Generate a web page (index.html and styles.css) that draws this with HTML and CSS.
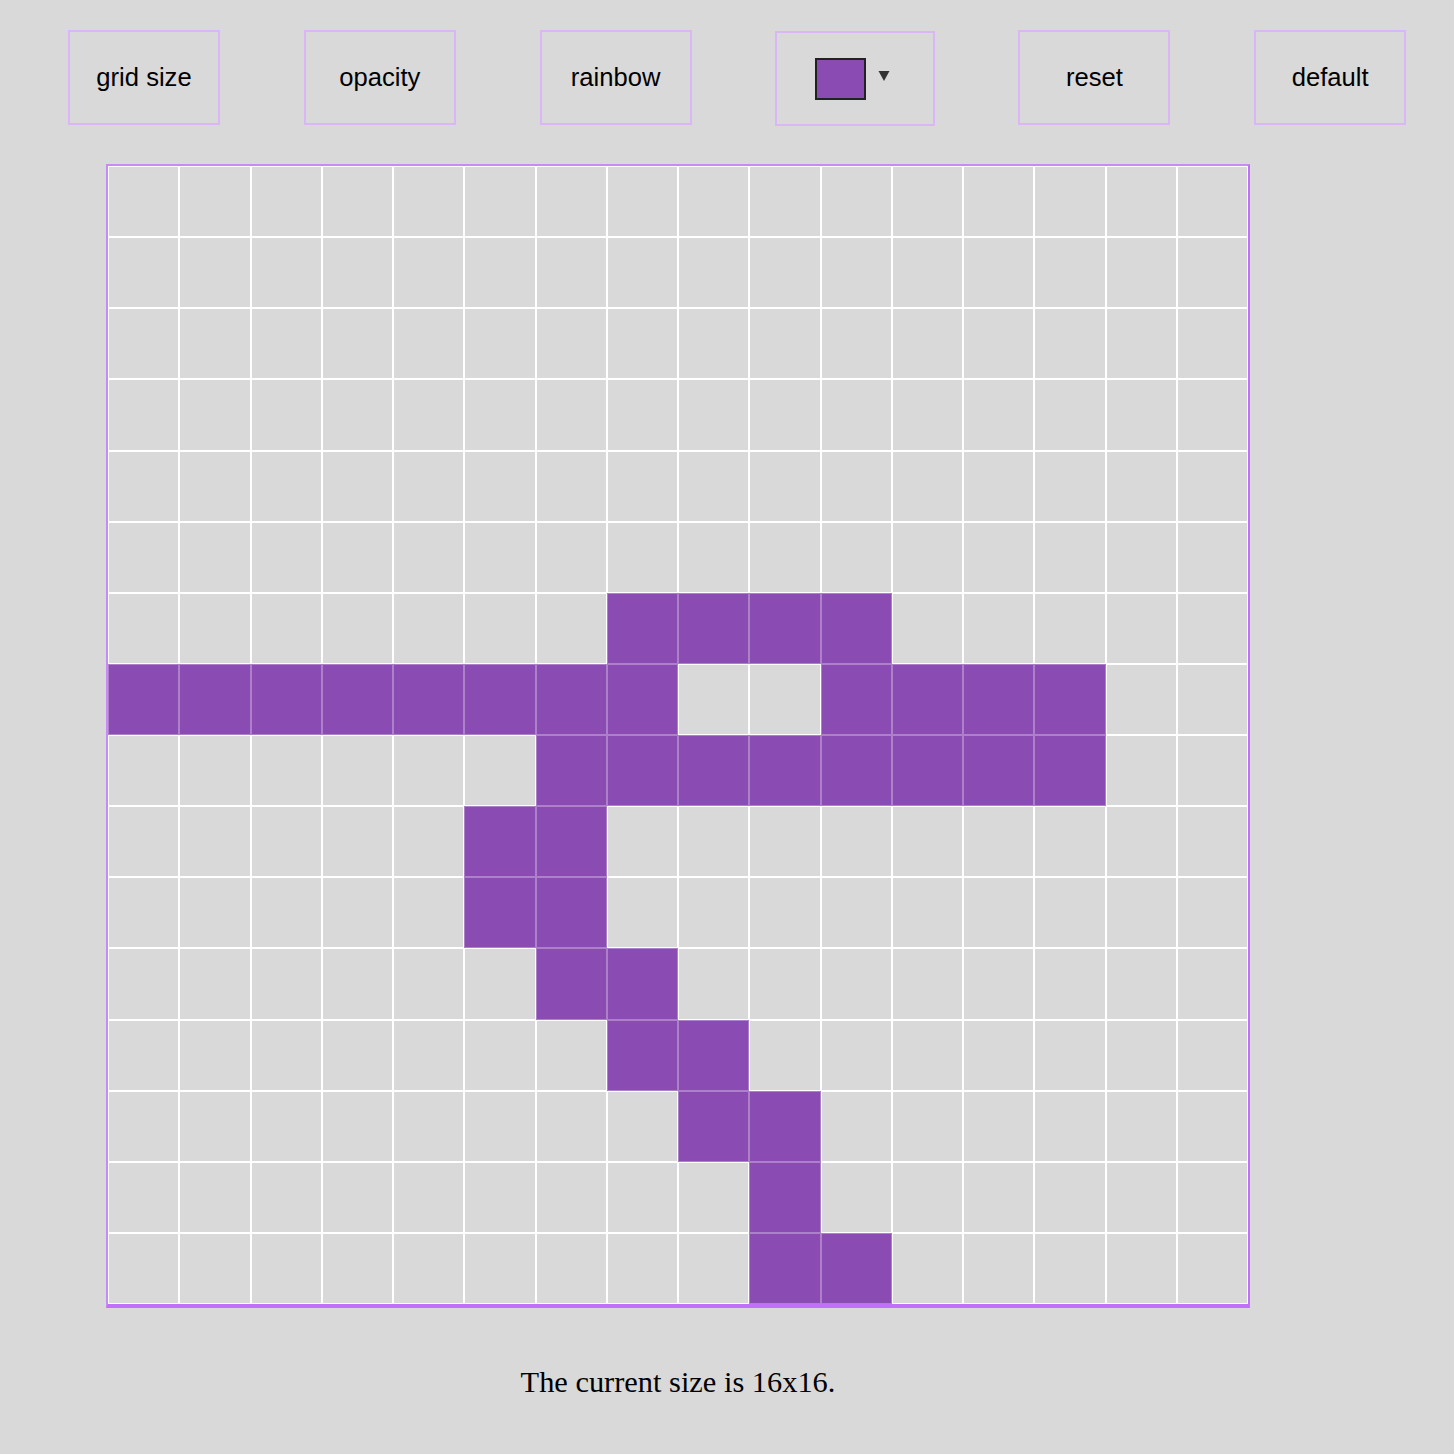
FILE: index.html
```html
<!DOCTYPE html>
<html lang="en">
<head>
<meta charset="utf-8">
<title>Etch a Sketch</title>
<link rel="stylesheet" href="styles.css">
</head>
<body>
<div class="toolbar">
  <button class="btn">grid size</button>
  <button class="btn">opacity</button>
  <button class="btn">rainbow</button>
  <div class="picker">
    <span class="swatch"></span>
    <svg class="caret" width="12" height="12" viewBox="0 0 12 12"><polygon points="0.5,1 11.5,1 6,11" fill="#333"/></svg>
  </div>
  <button class="btn">reset</button>
  <button class="btn">default</button>
</div>
<main class="board">
  <div class="grid">
    <div class="c"></div><div class="c"></div><div class="c"></div><div class="c"></div><div class="c"></div><div class="c"></div><div class="c"></div><div class="c"></div><div class="c"></div><div class="c"></div><div class="c"></div><div class="c"></div><div class="c"></div><div class="c"></div><div class="c"></div><div class="c"></div>
    <div class="c"></div><div class="c"></div><div class="c"></div><div class="c"></div><div class="c"></div><div class="c"></div><div class="c"></div><div class="c"></div><div class="c"></div><div class="c"></div><div class="c"></div><div class="c"></div><div class="c"></div><div class="c"></div><div class="c"></div><div class="c"></div>
    <div class="c"></div><div class="c"></div><div class="c"></div><div class="c"></div><div class="c"></div><div class="c"></div><div class="c"></div><div class="c"></div><div class="c"></div><div class="c"></div><div class="c"></div><div class="c"></div><div class="c"></div><div class="c"></div><div class="c"></div><div class="c"></div>
    <div class="c"></div><div class="c"></div><div class="c"></div><div class="c"></div><div class="c"></div><div class="c"></div><div class="c"></div><div class="c"></div><div class="c"></div><div class="c"></div><div class="c"></div><div class="c"></div><div class="c"></div><div class="c"></div><div class="c"></div><div class="c"></div>
    <div class="c"></div><div class="c"></div><div class="c"></div><div class="c"></div><div class="c"></div><div class="c"></div><div class="c"></div><div class="c"></div><div class="c"></div><div class="c"></div><div class="c"></div><div class="c"></div><div class="c"></div><div class="c"></div><div class="c"></div><div class="c"></div>
    <div class="c"></div><div class="c"></div><div class="c"></div><div class="c"></div><div class="c"></div><div class="c"></div><div class="c"></div><div class="c"></div><div class="c"></div><div class="c"></div><div class="c"></div><div class="c"></div><div class="c"></div><div class="c"></div><div class="c"></div><div class="c"></div>
    <div class="c"></div><div class="c"></div><div class="c"></div><div class="c"></div><div class="c"></div><div class="c"></div><div class="c"></div><div class="c on"></div><div class="c on"></div><div class="c on"></div><div class="c on"></div><div class="c"></div><div class="c"></div><div class="c"></div><div class="c"></div><div class="c"></div>
    <div class="c on"></div><div class="c on"></div><div class="c on"></div><div class="c on"></div><div class="c on"></div><div class="c on"></div><div class="c on"></div><div class="c on"></div><div class="c"></div><div class="c"></div><div class="c on"></div><div class="c on"></div><div class="c on"></div><div class="c on"></div><div class="c"></div><div class="c"></div>
    <div class="c"></div><div class="c"></div><div class="c"></div><div class="c"></div><div class="c"></div><div class="c"></div><div class="c on"></div><div class="c on"></div><div class="c on"></div><div class="c on"></div><div class="c on"></div><div class="c on"></div><div class="c on"></div><div class="c on"></div><div class="c"></div><div class="c"></div>
    <div class="c"></div><div class="c"></div><div class="c"></div><div class="c"></div><div class="c"></div><div class="c on"></div><div class="c on"></div><div class="c"></div><div class="c"></div><div class="c"></div><div class="c"></div><div class="c"></div><div class="c"></div><div class="c"></div><div class="c"></div><div class="c"></div>
    <div class="c"></div><div class="c"></div><div class="c"></div><div class="c"></div><div class="c"></div><div class="c on"></div><div class="c on"></div><div class="c"></div><div class="c"></div><div class="c"></div><div class="c"></div><div class="c"></div><div class="c"></div><div class="c"></div><div class="c"></div><div class="c"></div>
    <div class="c"></div><div class="c"></div><div class="c"></div><div class="c"></div><div class="c"></div><div class="c"></div><div class="c on"></div><div class="c on"></div><div class="c"></div><div class="c"></div><div class="c"></div><div class="c"></div><div class="c"></div><div class="c"></div><div class="c"></div><div class="c"></div>
    <div class="c"></div><div class="c"></div><div class="c"></div><div class="c"></div><div class="c"></div><div class="c"></div><div class="c"></div><div class="c on"></div><div class="c on"></div><div class="c"></div><div class="c"></div><div class="c"></div><div class="c"></div><div class="c"></div><div class="c"></div><div class="c"></div>
    <div class="c"></div><div class="c"></div><div class="c"></div><div class="c"></div><div class="c"></div><div class="c"></div><div class="c"></div><div class="c"></div><div class="c on"></div><div class="c on"></div><div class="c"></div><div class="c"></div><div class="c"></div><div class="c"></div><div class="c"></div><div class="c"></div>
    <div class="c"></div><div class="c"></div><div class="c"></div><div class="c"></div><div class="c"></div><div class="c"></div><div class="c"></div><div class="c"></div><div class="c"></div><div class="c on"></div><div class="c"></div><div class="c"></div><div class="c"></div><div class="c"></div><div class="c"></div><div class="c"></div>
    <div class="c"></div><div class="c"></div><div class="c"></div><div class="c"></div><div class="c"></div><div class="c"></div><div class="c"></div><div class="c"></div><div class="c"></div><div class="c on"></div><div class="c on"></div><div class="c"></div><div class="c"></div><div class="c"></div><div class="c"></div><div class="c"></div>
  </div>
  <p class="size">The current size is 16x16.</p>
</main>
</body>
</html>
```
FILE: styles.css
```css
html, body {
  margin: 0;
  padding: 0;
  background: #d9d9d9;
}

body {
  font-family: "Liberation Sans", Arial, sans-serif;
}

.toolbar {
  display: flex;
  align-items: flex-start;
  gap: 83.8px;
  padding: 30px 0 0 68px;
}

.btn {
  box-sizing: border-box;
  flex: none;
  width: 152px;
  height: 95px;
  margin: 0;
  padding: 0;
  background: #d9d9d9;
  border: 2px solid #dab6f6;
  font-family: "Liberation Sans", Arial, sans-serif;
  font-size: 25.6px;
  color: #000;
}

.picker {
  box-sizing: border-box;
  flex: none;
  width: 159.2px;
  height: 95px;
  margin-top: 1px;
  border: 2px solid #dab6f6;
  display: flex;
  align-items: center;
  padding-left: 38px;
}

.swatch {
  box-sizing: border-box;
  width: 51px;
  height: 42px;
  background: #8a4bb3;
  border: 2px solid #222;
  margin-top: 1px;
}

.caret {
  margin-left: 12px;
  margin-top: -5px;
}

.board {
  width: 1144px;
  margin: 38px 0 0 106px;
}

.grid {
  box-sizing: content-box;
  width: 1140px;
  height: 1138px;
  display: grid;
  grid-template-columns: repeat(16, 1fr);
  grid-template-rows: repeat(16, 1fr);
  border: 2px solid #c070fa;
  border-top-color: #c98af9;
  border-left-color: #c98af9;
  border-bottom-width: 4px;
}

.c {
  box-sizing: border-box;
  border: 1px solid #fff;
}

.c.on {
  background: #8a4bb3;
  border-color: rgba(255, 255, 255, 0.3);
}

.size {
  margin: 57px 0 0;
  text-align: center;
  font-family: "Liberation Serif", "Times New Roman", serif;
  font-size: 30.4px;
  color: #000;
}
```
